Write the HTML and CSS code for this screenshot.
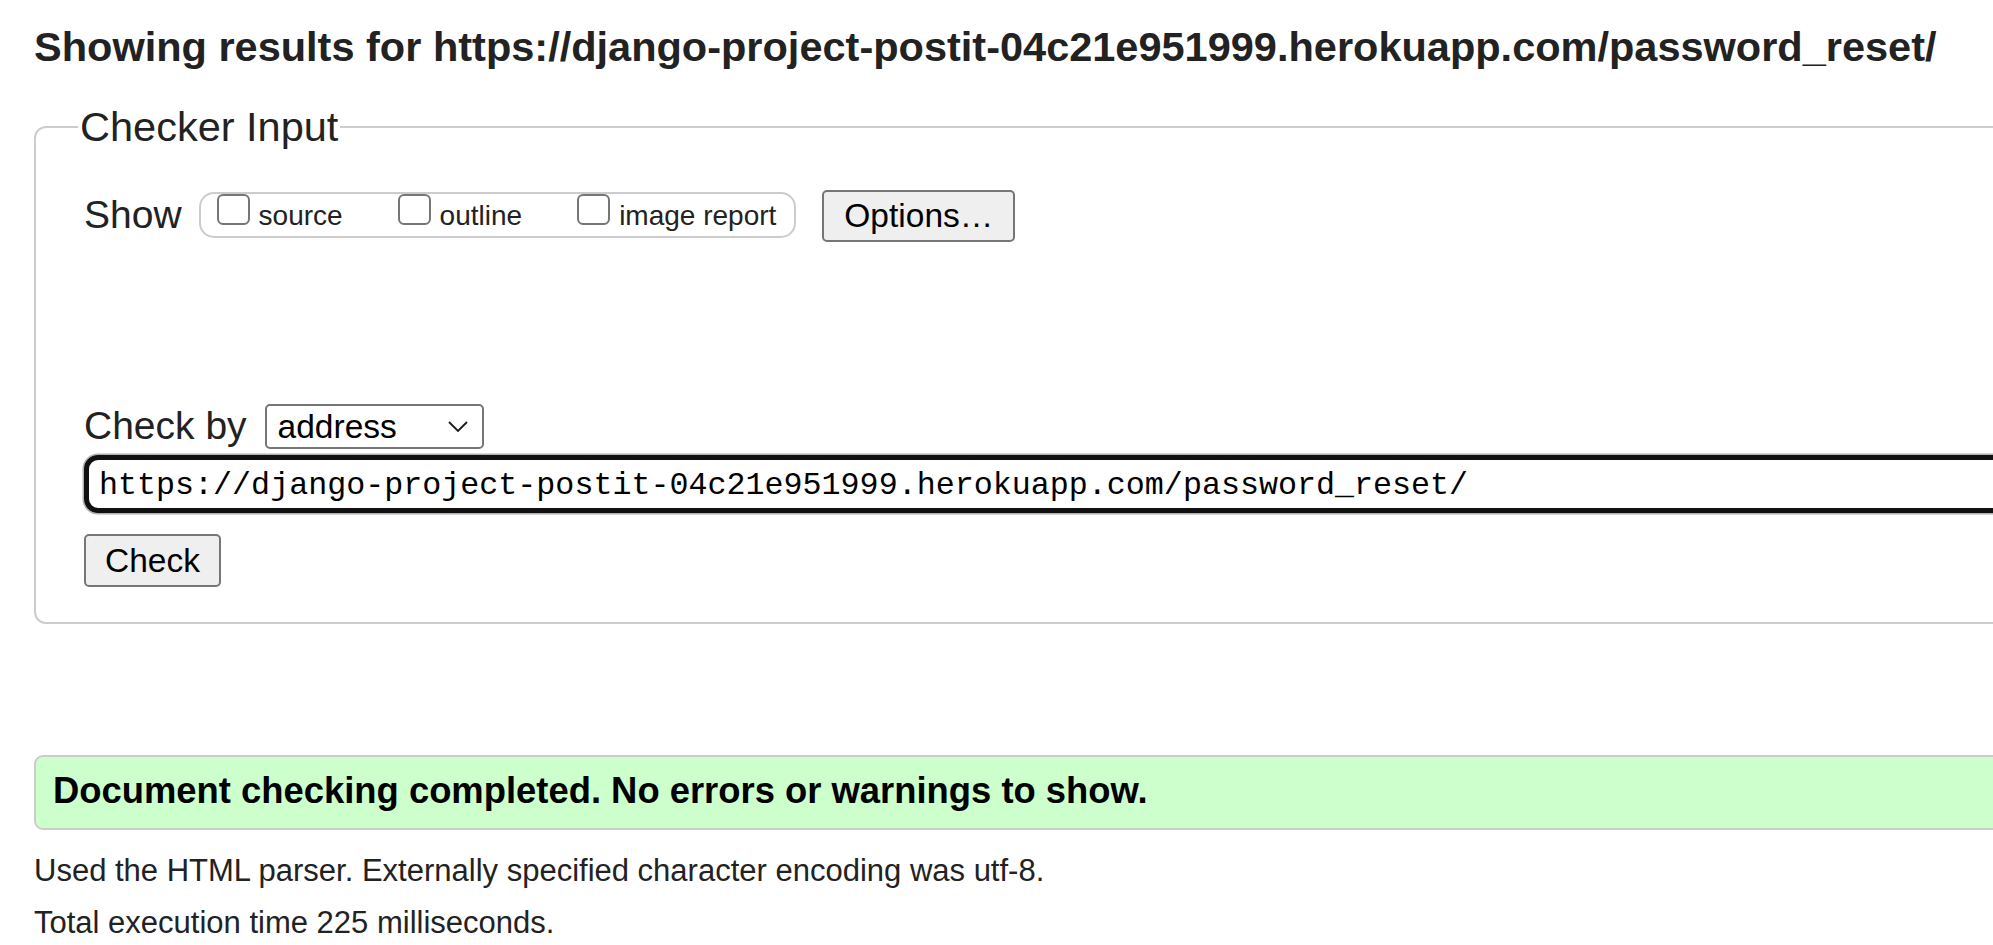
FILE: index.html
```html
<!DOCTYPE html>
<html lang="en">
<head>
<meta charset="utf-8">
<title>Nu Html Checker</title>
<link rel="stylesheet" href="styles.css">
</head>
<body>
<main class="page">
  <h1 class="title">Showing results for https://django-project-postit-04c21e951999.herokuapp.com/password_reset/</h1>
  <form class="form">
    <fieldset class="checker">
      <legend class="legend">Checker Input</legend>
      <div class="row show-row">
        <span class="lbl lbl-show">Show</span>
        <span class="group">
          <label class="opt"><span class="cb"></span><span class="opt-text">source</span></label>
          <label class="opt"><span class="cb"></span><span class="opt-text">outline</span></label>
          <label class="opt"><span class="cb"></span><span class="opt-text">image report</span></label>
        </span>
        <span class="btn btn-options">Options…</span>
      </div>
      <div class="row check-row">
        <span class="lbl lbl-by">Check by</span>
        <span class="select">
          <span class="select-text">address</span>
          <svg class="chev" width="20" height="11" viewBox="0 0 20 11"><polyline points="1,1 10,10 19,1" fill="none" stroke="#1a1a1a" stroke-width="1.8"/></svg>
        </span>
      </div>
      <div class="url">https://django-project-postit-04c21e951999.herokuapp.com/password_reset/</div>
      <span class="btn btn-check">Check</span>
    </fieldset>
  </form>
  <div class="success">Document checking completed. No errors or warnings to show.</div>
  <p class="note">Used the HTML parser. Externally specified character encoding was utf-8.</p>
  <p class="note">Total execution time 225 milliseconds.</p>
</main>
</body>
</html>
```

FILE: styles.css
```css
html, body {
  margin: 0;
  padding: 0;
  background: #fff;
  overflow: hidden;
}

body {
  font-family: "Liberation Sans", Arial, sans-serif;
  color: #222;
}

.page {
  padding: 0 0 0 34px;
  width: 2300px;
}

.title {
  margin: 23px 0 0;
  font-size: 41.5px;
  line-height: 48px;
  font-weight: bold;
  color: #222;
}

.form {
  margin: 32px 0 0;
}

.checker {
  margin: 0;
  width: 2200px;
  box-sizing: border-box;
  border: 2px solid #cccccc;
  border-radius: 12px;
  padding: 0 0 35px 48px;
  min-width: 0;
}

.legend {
  font-size: 41.5px;
  line-height: 48px;
  padding: 0 2px;
  margin-left: -6px;
  color: #222;
}

.row {
  display: flex;
  align-items: flex-start;
}

.show-row {
  margin-top: 39px;
}

.lbl {
  font-size: 39px;
  line-height: 44px;
  margin-right: 16px;
  color: #222;
}

.lbl-show {
  margin-top: 3px;
  margin-right: 17px;
}

.group {
  display: flex;
  align-items: flex-start;
  box-sizing: border-box;
  height: 46px;
  margin-top: 2px;
  border: 2px solid #cccccc;
  border-radius: 15px;
  padding: 0 18px 0 16px;
}

.opt {
  display: flex;
  align-items: baseline;
  margin-left: 55px;
}

.opt:first-child {
  margin-left: 0;
}

.cb {
  display: inline-block;
  box-sizing: border-box;
  width: 33px;
  height: 31px;
  border: 2px solid #767676;
  border-radius: 6px;
  background: #fff;
  margin-right: 9px;
}

.opt-text {
  font-size: 28px;
  line-height: 32px;
  color: #222;
}

.btn {
  display: inline-flex;
  align-items: center;
  justify-content: center;
  box-sizing: border-box;
  border: 2px solid #767676;
  border-radius: 5px;
  background: #efefef;
  font-size: 33.5px;
  color: #000;
  padding: 0 19px;
}

.btn-options {
  height: 52px;
  margin-left: 26px;
  padding: 0 20px;
}

.check-row {
  margin-top: 160px;
}

.lbl-by {
  margin-top: 2px;
  margin-right: 18px;
}

.select {
  display: flex;
  align-items: center;
  box-sizing: border-box;
  width: 219px;
  height: 45px;
  margin-top: 2px;
  border: 2px solid #767676;
  border-radius: 5px;
  padding: 0 14px 0 11px;
  background: #fff;
}

.select-text {
  flex: 1;
  font-size: 33.5px;
  line-height: 41px;
  color: #000;
}

.chev {
  display: block;
}

.url {
  box-sizing: border-box;
  height: 58px;
  margin-top: 6px;
  margin-right: 40px;
  border: 5px solid #101010;
  border-radius: 14px;
  box-shadow: 0 0 0 1.5px #b0b0b0;
  padding: 6px 10px 0;
  font-family: "Liberation Mono", "Courier New", monospace;
  font-size: 31.7px;
  line-height: 41px;
  color: #000;
  white-space: nowrap;
}

.btn-check {
  height: 53px;
  margin-top: 21px;
}

.success {
  margin-top: 131px;
  width: 2200px;
  box-sizing: border-box;
  border: 2px solid #cccccc;
  border-radius: 9px;
  background: #ccffcc;
  padding: 13px 17px 16px;
  font-size: 36.4px;
  line-height: 42px;
  font-weight: bold;
  color: #000;
}

.note {
  margin: 16px 0 0;
  font-size: 31px;
  line-height: 36px;
  color: #222;
}

.success + .note {
  margin-top: 23px;
}
```
